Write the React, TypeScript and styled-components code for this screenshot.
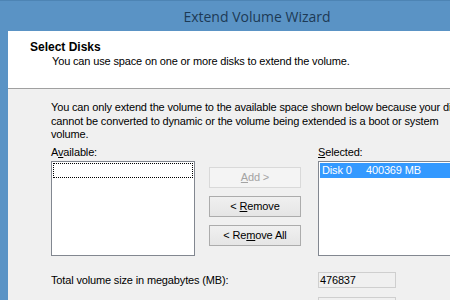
import React from 'react';
import styled, { createGlobalStyle } from 'styled-components';

const GlobalStyle = createGlobalStyle`
  html, body {
    margin: 0;
    padding: 0;
    overflow: hidden;
    background: #5a93c5;
  }
  body {
    font-family: "Liberation Sans", Arial, sans-serif;
  }
`;

const Key = ({ children }: { children: React.ReactNode }) => <u>{children}</u>;

const App = () => {
  return (
    <>
      <GlobalStyle />
      <Window>
        <TitleBar>Extend Volume Wizard</TitleBar>
        <Frame>
          <Client>
            <Header>
              <HeaderTitle>Select Disks</HeaderTitle>
              <HeaderText>You can use space on one or more disks to extend the volume.</HeaderText>
            </Header>
            <Body>
              <Paragraph>
                You can only extend the volume to the available space shown below because your disk
                <br />
                cannot be converted to dynamic or the volume being extended is a boot or system
                <br />
                volume.
              </Paragraph>
              <DiskGrid>
                <Label>
                  A<Key>v</Key>ailable:
                </Label>
                <span />
                <Label>
                  <Key>S</Key>elected:
                </Label>
                <ListBox>
                  <FocusRow />
                </ListBox>
                <ButtonColumn>
                  <Button disabled>
                    <Key>A</Key>dd &gt;
                  </Button>
                  <Button>
                    &lt; <Key>R</Key>emove
                  </Button>
                  <Button>
                    &lt; Re<Key>m</Key>ove All
                  </Button>
                </ButtonColumn>
                <ListBox>
                  <SelectedRow>
                    <DiskName>Disk 0</DiskName>
                    <span>400369 MB</span>
                  </SelectedRow>
                </ListBox>
              </DiskGrid>
              <SizeRows>
                <SizeRow>
                  <SizeLabel>Total volume size in megabytes (MB):</SizeLabel>
                  <ReadOnlyBox>476837</ReadOnlyBox>
                </SizeRow>
                <SizeRow>
                  <SizeLabel>Maximum available space in MB:</SizeLabel>
                  <ReadOnlyBox>0</ReadOnlyBox>
                </SizeRow>
              </SizeRows>
            </Body>
          </Client>
        </Frame>
      </Window>
    </>
  );
};

const Window = styled.div`
  width: 514px;
  display: flex;
  flex-direction: column;
`;

const TitleBar = styled.div`
  height: 31px;
  box-sizing: border-box;
  border-top: 1px solid #4d84b4;
  display: flex;
  align-items: center;
  justify-content: center;
  font-family: "Open Sans", "Noto Sans", sans-serif;
  font-size: 14px;
  color: #1d3a55;
  background: #5a93c5;
`;

const Frame = styled.div`
  padding-left: 8px;
  background: #5a93c5;
`;

const Client = styled.div`
  background: #f0f0f0;
  display: flex;
  flex-direction: column;
  font-size: 11px;
  letter-spacing: -0.15px;
  color: #000;
`;

const Header = styled.div`
  height: 58px;
  box-sizing: border-box;
  padding: 9px 0 0 22px;
  background: #fff;
  border-bottom: 1px solid #a0a0a0;
`;

const HeaderTitle = styled.div`
  font-weight: bold;
  font-size: 12px;
  line-height: 14px;
  letter-spacing: 0;
`;

const HeaderText = styled.div`
  padding-left: 22px;
  line-height: 14px;
`;

const Body = styled.div`
  padding: 12px 0 0 43px;
  display: flex;
  flex-direction: column;
`;

const Paragraph = styled.div`
  white-space: nowrap;
  line-height: 13.5px;
`;

const DiskGrid = styled.div`
  margin-top: 3px;
  display: grid;
  grid-template-columns: 144px 92px 144px;
  column-gap: 14px;
  grid-template-rows: 16px 95px;
  & > :nth-child(3),
  & > :nth-child(6) {
    margin-left: 3px;
  }
`;

const Label = styled.div`
  line-height: 14px;
`;

const ListBox = styled.div`
  box-sizing: border-box;
  height: 95px;
  background: #fff;
  border: 1px solid #828790;
  padding: 1px;
`;

const FocusRow = styled.div`
  height: 15px;
  box-sizing: border-box;
  border: 1px dotted #000;
`;

const SelectedRow = styled.div`
  height: 15px;
  display: flex;
  align-items: center;
  padding-left: 2px;
  background: #3399ff;
  color: #fff;
`;

const DiskName = styled.span`
  width: 44px;
`;

const ButtonColumn = styled.div`
  padding-top: 6px;
  display: flex;
  flex-direction: column;
  gap: 8px;
`;

const Button = styled.button`
  height: 21px;
  padding: 0;
  font-family: "Liberation Sans", Arial, sans-serif;
  font-size: 11px;
  letter-spacing: -0.15px;
  color: #000;
  border: 1px solid #acacac;
  border-radius: 0;
  background: linear-gradient(#f0f0f0, #e5e5e5);
  &:disabled {
    color: #a3a3a3;
    border-color: #d9d9d9;
    background: #f4f4f4;
  }
`;

const SizeRows = styled.div`
  margin-top: 16px;
  display: flex;
  flex-direction: column;
  gap: 9px;
`;

const SizeRow = styled.div`
  display: flex;
  align-items: center;
`;

const SizeLabel = styled.div`
  width: 267px;
`;

const ReadOnlyBox = styled.div`
  width: 78px;
  height: 16px;
  box-sizing: border-box;
  padding-left: 1px;
  border: 1px solid #cfcfcf;
  background: #f0f0f0;
  line-height: 14px;
`;

export default App;
